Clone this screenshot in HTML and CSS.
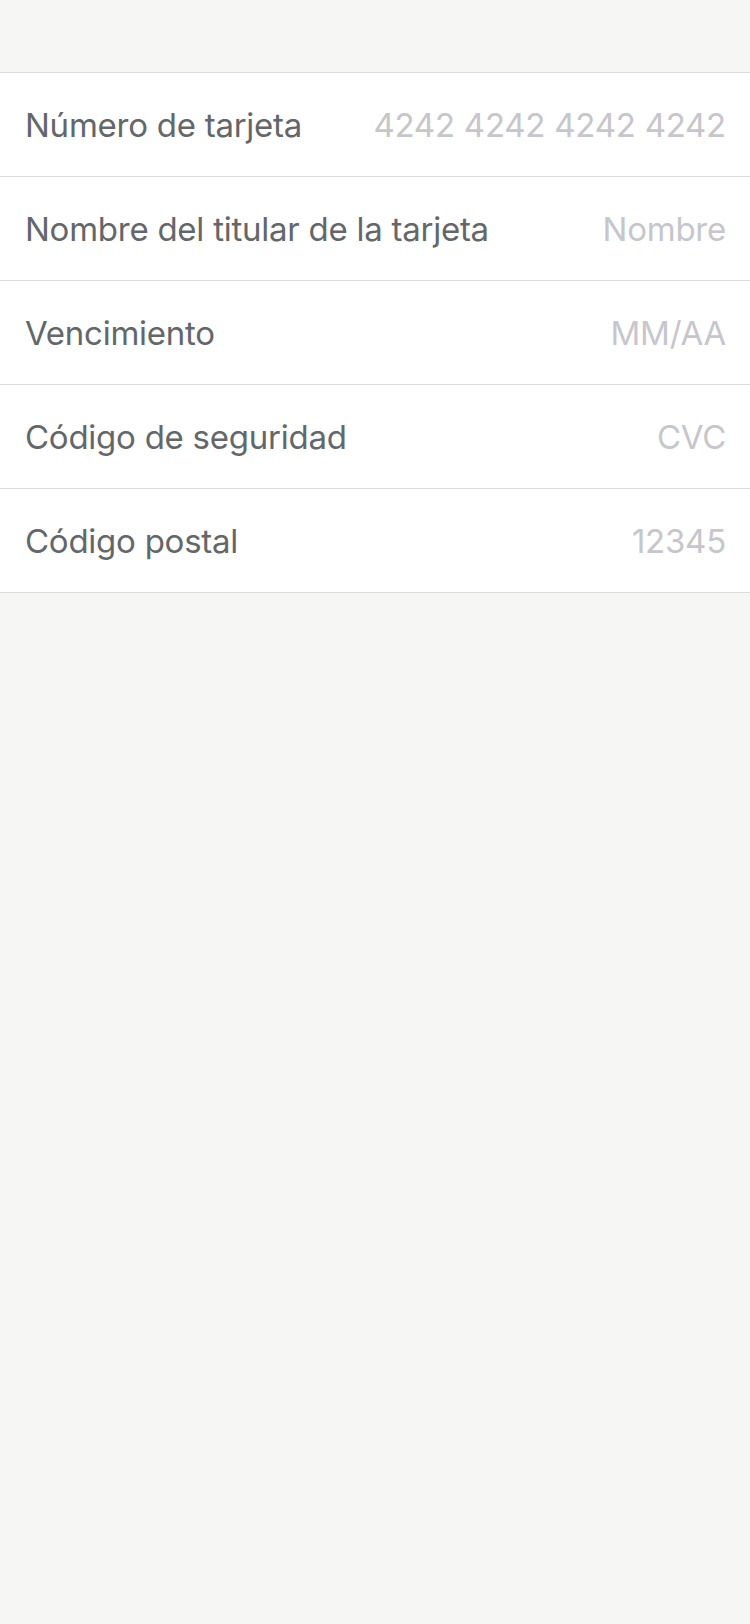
FILE: index.html
```html
<!DOCTYPE html>
<html lang="es">
<head>
<meta charset="utf-8">
<link rel="stylesheet" href="styles.css">
</head>
<body>
<div class="page">
  <div class="form">
    <div class="row"><span class="label">Número de tarjeta</span><span class="ph">4242 4242 4242 4242</span></div>
    <div class="row"><span class="label">Nombre del titular de la tarjeta</span><span class="ph">Nombre</span></div>
    <div class="row"><span class="label">Vencimiento</span><span class="ph">MM/AA</span></div>
    <div class="row"><span class="label">Código de seguridad</span><span class="ph">CVC</span></div>
    <div class="row"><span class="label">Código postal</span><span class="ph">12345</span></div>
  </div>
</div>
</body>
</html>
```
FILE: styles.css
```css
html, body {
  margin: 0;
  padding: 0;
  background: #f6f6f4;
}
.page {
  min-height: 1624px;
  padding-top: 72px;
  box-sizing: border-box;
  font-family: Inter, "Noto Sans", sans-serif;
}
.form {
  background: #ffffff;
  border-top: 1px solid #dcdcdc;
}
.row {
  height: 103px;
  border-bottom: 1px solid #dcdcdc;
  display: flex;
  align-items: center;
  justify-content: space-between;
  padding: 0 24px 0 25px;
  font-size: 33px;
  letter-spacing: -0.25px;
}
.label {
  color: #63676a;
}
.ph {
  color: #c6c6cb;
}
```
